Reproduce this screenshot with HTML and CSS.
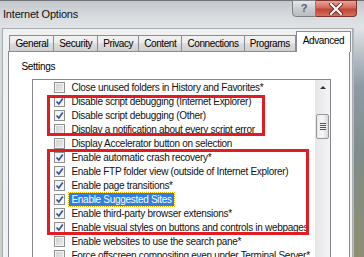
FILE: index.html
```html
<!DOCTYPE html>
<html lang="en">
<head>
    <meta charset="UTF-8">
    <title>Internet Options</title>
    <link rel="stylesheet" href="styles.css">
</head>
<body>
    <div class="window">
        <div class="titlebar">
            <span class="title">Internet Options</span>
            <div class="caption-buttons">
                <span class="btn-help">?</span>
                <span class="btn-close">
                    <svg width="14" height="12" viewBox="0 0 14 12">
                        <path d="M2 1 L12 11 M12 1 L2 11" stroke="#6b2a25" stroke-width="4" stroke-linecap="round"/>
                        <path d="M2 1 L12 11 M12 1 L2 11" stroke="#fff" stroke-width="2.2" stroke-linecap="round"/>
                    </svg>
                </span>
            </div>
        </div>
        <div class="body-row">
            <div class="frame-left"></div>
            <div class="client">
                <div class="tabs">
                    <span class="tab">General</span>
                    <span class="tab">Security</span>
                    <span class="tab">Privacy</span>
                    <span class="tab">Content</span>
                    <span class="tab">Connections</span>
                    <span class="tab">Programs</span>
                    <span class="tab active">Advanced</span>
                </div>
                <div class="panel">
                    <div class="group-label">Settings</div>
                    <div class="listbox">
                        <ul class="items">
                            <li><span class="check"></span>Close unused folders in History and Favorites*</li>
                            <li><span class="check on"></span>Disable script debugging (Internet Explorer)</li>
                            <li><span class="check on"></span>Disable script debugging (Other)</li>
                            <li><span class="check"></span>Display a notification about every script error</li>
                            <li><span class="check"></span>Display Accelerator button on selection</li>
                            <li><span class="check on"></span>Enable automatic crash recovery*</li>
                            <li><span class="check on"></span>Enable FTP folder view (outside of Internet Explorer)</li>
                            <li><span class="check on"></span>Enable page transitions*</li>
                            <li><span class="check on"></span><span class="selected">Enable Suggested Sites</span></li>
                            <li><span class="check on"></span>Enable third-party browser extensions*</li>
                            <li><span class="check on"></span>Enable visual styles on buttons and controls in webpages</li>
                            <li><span class="check"></span>Enable websites to use the search pane*</li>
                            <li><span class="check"></span>Force offscreen compositing even under Terminal Server*</li>
                        </ul>
                        <div class="scrollbar">
                            <div class="arrow-up"></div>
                            <div class="thumb"><span class="grip"></span></div>
                        </div>
                        <div class="mark mark-one"></div>
                        <div class="mark mark-two"></div>
                    </div>
                </div>
            </div>
            <div class="frame-right"></div>
        </div>
    </div>
</body>
</html>
```

FILE: styles.css
```css
body {
    margin: 0;
    width: 364px;
    height: 257px;
    overflow: hidden;
    font-family: "Liberation Sans", Arial, sans-serif;
    font-size: 10px;
    color: #000;
    background: #cfd3d6;
}
.window {
    display: flex;
    flex-direction: column;
    height: 257px;
}
.titlebar {
    height: 28px;
    flex: none;
    display: flex;
    justify-content: space-between;
    align-items: flex-start;
    background: linear-gradient(#c4c8cc, #d9dcdf 60%, #e0e3e5);
    border-top: 1px solid #6f7378;
    box-sizing: border-box;
}
.title {
    font-size: 11px;
    letter-spacing: -0.2px;
    margin: 7px 0 0 3px;
    color: #111;
}
.caption-buttons {
    display: flex;
    margin-right: 7px;
    margin-top: -1px;
}
.btn-help {
    width: 24px;
    height: 17px;
    box-sizing: border-box;
    border: 1px solid #7d8186;
    border-radius: 0 0 0 4px;
    background: linear-gradient(#e6e8ea, #c9cdd1 50%, #b9bdc2);
    color: #5c6066;
    font-size: 11px;
    font-weight: bold;
    text-align: center;
    line-height: 15px;
}
.btn-close {
    width: 41px;
    height: 17px;
    box-sizing: border-box;
    border: 1px solid #7a3530;
    border-left: none;
    border-radius: 0 0 4px 0;
    background: linear-gradient(#e8a395, #d36a5c 45%, #c14334 55%, #d2715e);
    display: flex;
    align-items: center;
    justify-content: center;
}
.body-row {
    flex: 1;
    display: flex;
    min-height: 0;
}
.frame-left {
    width: 3px;
    background: linear-gradient(#d6dadc, #c9cec8);
}
.frame-right {
    width: 13px;
    background: linear-gradient(#dfe2e4, #8d9aa6 25%, #7f8c8a 55%, #8f8e6f);
    border-left: 1px solid #b5b9bd;
    box-sizing: border-box;
}
.client {
    flex: 1;
    display: flex;
    flex-direction: column;
    background: #f0f0f0;
    border-top: 1px solid #a9adb1;
    border-left: 1px solid #a9adb1;
    border-right: 1px solid #a9adb1;
    padding: 2px 2px 0 5px;
}
.tabs {
    display: flex;
    align-items: flex-end;
    height: 20px;
    padding-left: 1px;
}
.tab {
    height: 16px;
    box-sizing: border-box;
    padding: 0 5px;
    border: 1px solid #898c95;
    border-bottom: none;
    margin-right: -1px;
    background: linear-gradient(#f2f2f2, #ebebeb 50%, #dddddd 50%, #cfcfcf);
    letter-spacing: -0.4px;
    line-height: 15px;
}
.tab.active {
    height: 21px;
    margin-bottom: -1px;
    margin-left: 1px;
    padding: 0 6px;
    background: #fff;
    position: relative;
    z-index: 1;
    line-height: 17px;
}
.panel {
    flex: 1;
    display: flex;
    flex-direction: column;
    background: #fff;
    border: 1px solid #898c95;
    border-bottom: none;
    padding: 9px 18px 0 12px;
}
.group-label {
    line-height: 12px;
    letter-spacing: -0.3px;
    margin-bottom: 6px;
}
.listbox {
    flex: 1;
    display: flex;
    margin-left: 11px;
    border: 1px solid #828790;
    border-bottom: none;
    position: relative;
}
.items {
    flex: 1;
    list-style: none;
    margin: 0;
    padding: 0;
}
.items li {
    height: 14px;
    display: flex;
    align-items: center;
    padding-left: 21px;
    white-space: nowrap;
    letter-spacing: -0.3px;
    color: #111;
}
.check {
    width: 11px;
    height: 11px;
    box-sizing: border-box;
    border: 1px solid #8e8f8f;
    margin-right: 6px;
    flex: none;
    background: linear-gradient(135deg, #cfcfcf, #ececec);
    box-shadow: inset 0 0 0 1px #f4f4f4;
}
.check.on {
    background: #f4f4f4 url("data:image/svg+xml,%3Csvg xmlns='http://www.w3.org/2000/svg' width='9' height='9'%3E%3Cpath d='M1.5 4.5 L3.8 7 L7.8 1.5' fill='none' stroke='%23334d9a' stroke-width='1.6'/%3E%3C/svg%3E") no-repeat center;
    box-shadow: none;
}
.selected {
    background: #2f7ee0;
    color: #fff;
    outline: 1px dotted #f4b000;
    padding: 0 2px;
    margin-left: -2px;
    line-height: 13px;
}
.scrollbar {
    width: 15px;
    flex: none;
    background: linear-gradient(90deg, #e6e6e6, #f4f4f4);
    display: flex;
    flex-direction: column;
    align-items: center;
}
.arrow-up {
    width: 0;
    height: 0;
    margin-top: 6px;
    border-left: 3px solid transparent;
    border-right: 3px solid transparent;
    border-bottom: 3px solid #333;
}
.thumb {
    margin-top: 25px;
    width: 13px;
    height: 25px;
    box-sizing: border-box;
    border: 1px solid #979797;
    border-radius: 2px;
    background: linear-gradient(90deg, #eaeaea, #f6f6f6 50%, #d8d8d8);
    display: flex;
    align-items: center;
    justify-content: center;
}
.grip {
    width: 6px;
    height: 7px;
    background: repeating-linear-gradient(#555 0 1px, transparent 1px 2px);
}
.mark {
    position: absolute;
    border: 3px solid #e31b23;
    box-sizing: border-box;
}
.mark-one {
    left: 14px;
    top: 15px;
    width: 218px;
    height: 41px;
}
.mark-two {
    left: 14px;
    top: 69px;
    width: 262px;
    height: 86px;
}
```
